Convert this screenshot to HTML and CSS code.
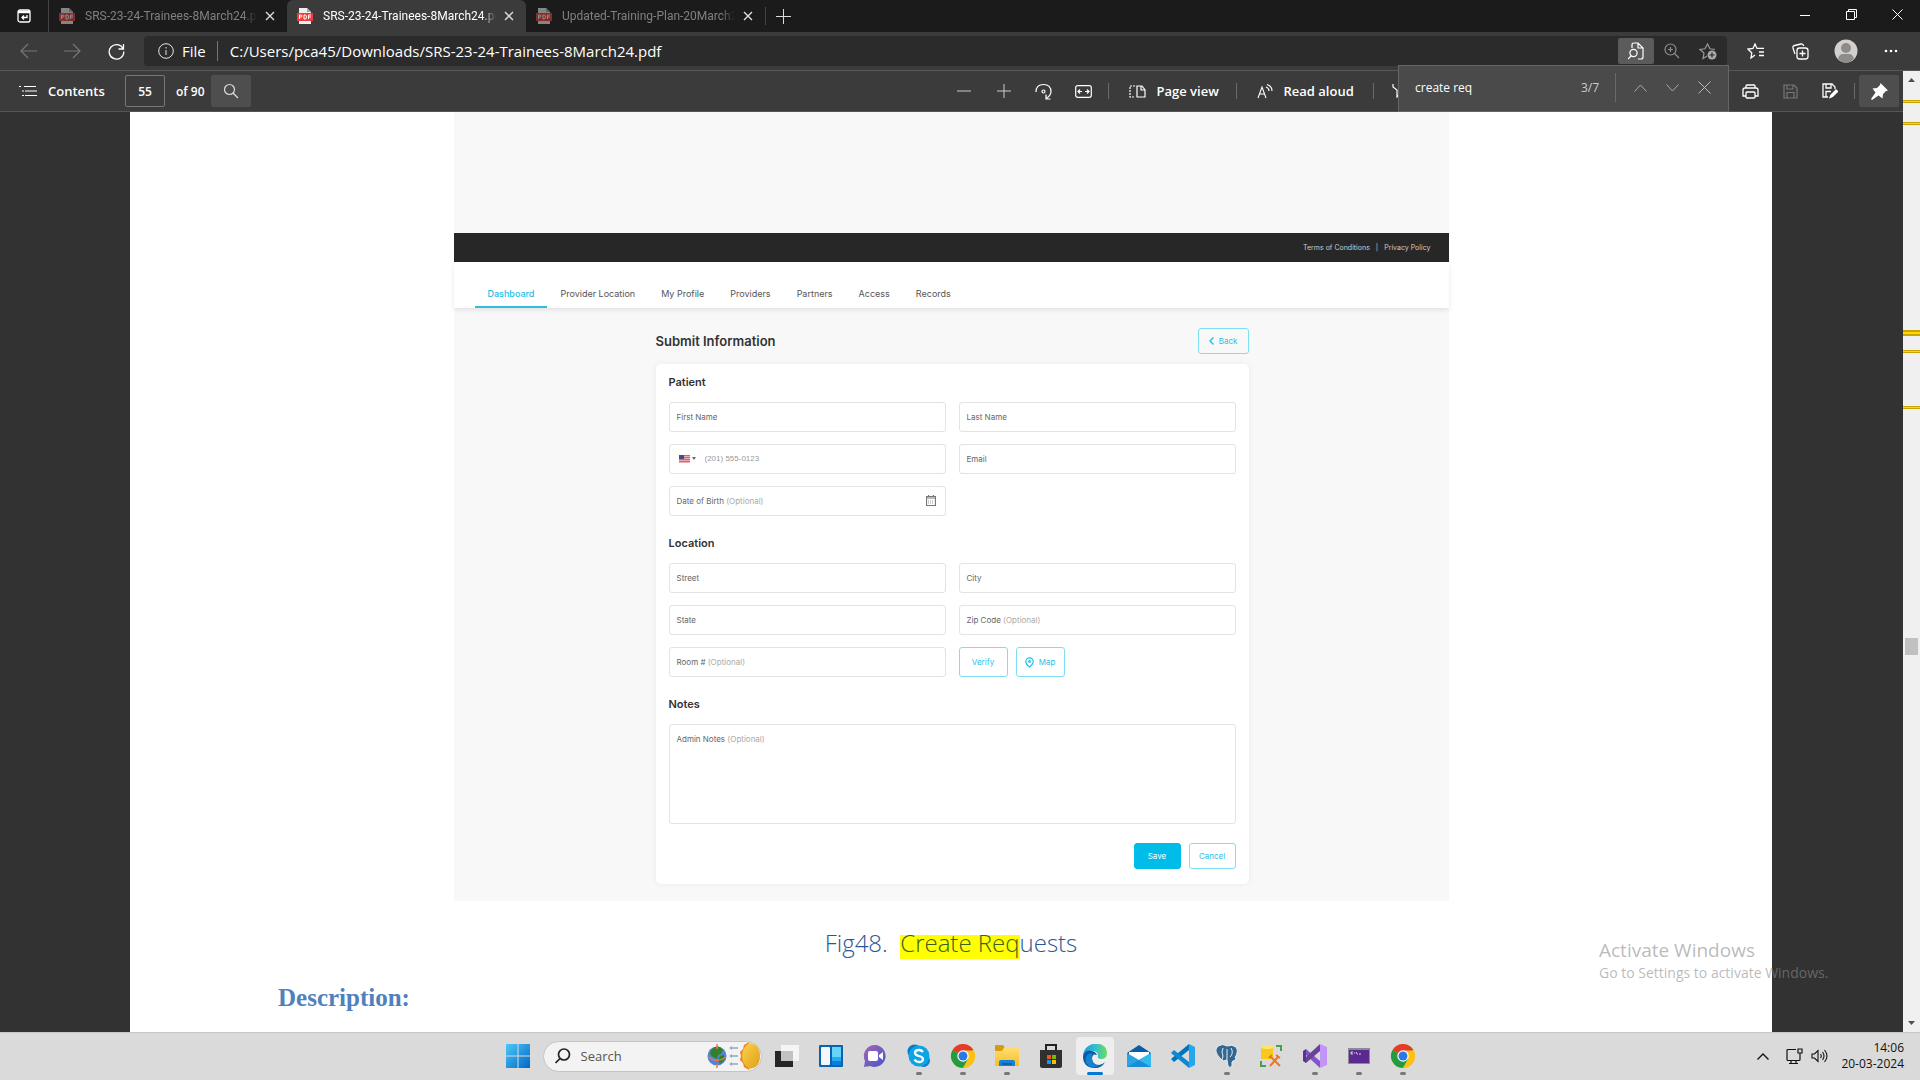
FILE: index.html
```html
<!DOCTYPE html>
<html lang="en">
<head>
<meta charset="utf-8">
<title>SRS-23-24-Trainees-8March24.pdf</title>
<link rel="stylesheet" href="styles.css">
</head>
<body>
<svg class="defs" aria-hidden="true">
  <defs>
    <linearGradient id="g-win" x1="0" y1="0" x2="1" y2="1"><stop offset="0" stop-color="#4cc8f8"/><stop offset="1" stop-color="#0067c4"/></linearGradient>
    <linearGradient id="g-chat" x1="0" y1="0" x2="1" y2="1"><stop offset="0" stop-color="#a566b4"/><stop offset="1" stop-color="#4655c8"/></linearGradient>
    <linearGradient id="g-folder" x1="0" y1="0" x2="0" y2="1"><stop offset="0" stop-color="#ffdf70"/><stop offset="1" stop-color="#f6bd27"/></linearGradient>
    <linearGradient id="g-edge" x1="0" y1="0" x2="1" y2="0"><stop offset="0" stop-color="#2394dc"/><stop offset=".5" stop-color="#32bfd0"/><stop offset="1" stop-color="#6ade5a"/></linearGradient>
    <linearGradient id="g-sun" x1="0" y1="0" x2="1" y2="1"><stop offset="0" stop-color="#ffd24d"/><stop offset="1" stop-color="#dc9f16"/></linearGradient>
    <symbol id="pdf" viewBox="0 0 16 16"><path d="M2 0h8l4 4v12H2z" fill="#eee"/><path d="M10 0v4h4" fill="#aaa"/><path d="M0 5h16v8H0z" fill="#f23b3b"/><path d="M2.500 11V7h1.500q1 0 1 1t-1 1H2.500M7 7v4h1q1.500 0 1.500-2T8 7zM11.500 11V7h2.500M11.500 9H14" fill="none" stroke="#fff"/></symbol>
    <symbol id="close" viewBox="0 0 10 10"><path d="M1 1l8 8M9 1L1 9" fill="none" stroke="currentColor" stroke-width="1.400"/></symbol>
    <symbol id="chrome" viewBox="0 0 24 24"><circle cx="12" cy="12" r="12" fill="#fbc116"/><path d="M1.600 6A12 12 0 0 1 22.400 6L12 12z" fill="#e33b2e"/><path d="M12 12L1.600 6a12 12 0 0 0 10.400 18l5.200-9z" fill="#249a41"/><path d="M12 6.500h10.700A12 12 0 0 1 12 24l5-9z" fill="#fbc116"/><circle cx="12" cy="12" r="5.700" fill="#fff"/><circle cx="12" cy="12" r="4.500" fill="#2a78e8"/></symbol>
  </defs>
</svg>
<div class="screen">
  <header class="tabs">
    <button class="tab-menu" aria-label="Tab actions"><svg width="14" height="14" viewBox="0 0 14 14" fill="none" stroke="#fff" stroke-width="1.300"><rect x="1" y="1" width="12" height="12" rx="2"/><path d="M1 3h12" stroke-width="2.500"/><path d="M10 6v2.500H5M7 6.500l-2 2 2 2"/></svg></button>
    <div class="tab first"><svg class="fav" width="16" height="16"><use href="#pdf"/></svg><span class="tab-title">SRS-23-24-Trainees-8March24.pdf</span><button class="tab-close" aria-label="Close tab"><svg width="10" height="10"><use href="#close"/></svg></button></div>
    <div class="tab active"><svg class="fav" width="16" height="16"><use href="#pdf"/></svg><span class="tab-title">SRS-23-24-Trainees-8March24.pdf</span><button class="tab-close" aria-label="Close tab"><svg width="10" height="10"><use href="#close"/></svg></button></div>
    <div class="tab"><svg class="fav" width="16" height="16"><use href="#pdf"/></svg><span class="tab-title">Updated-Training-Plan-20March24.pdf</span><button class="tab-close" aria-label="Close tab"><svg width="10" height="10"><use href="#close"/></svg></button></div>
    <button class="new-tab" aria-label="New tab"><svg width="15" height="15" viewBox="0 0 15 15" stroke="#ddd"><path d="M7.500 0v15M0 7.500h15"/></svg></button>
    <div class="win">
      <button aria-label="Minimise"><svg width="10" height="10" stroke="#fff"><path d="M0 5.500h10"/></svg></button>
      <button aria-label="Restore"><svg width="11" height="11" viewBox="0 0 11 11" fill="none" stroke="#fff"><path d="M.5 2.500h8v8h-8zM2.500 2.500v-2h8v8h-2"/></svg></button>
      <button aria-label="Close"><svg width="11" height="11" viewBox="0 0 11 11" stroke="#fff"><path d="M.5.5l10 10M10.500.5l-10 10"/></svg></button>
    </div>
  </header>

  <div class="address-row">
    <button class="nav-btn" aria-label="Back"><svg width="17" height="16" viewBox="0 0 17 16" fill="none" stroke="#777" stroke-width="1.200"><path d="M17 8H1M8 1L1 8l7 7"/></svg></button>
    <button class="nav-btn" aria-label="Forward"><svg width="17" height="16" viewBox="0 0 17 16" fill="none" stroke="#777" stroke-width="1.200"><path d="M0 8h16M9 1l7 7-7 7"/></svg></button>
    <button class="nav-btn" aria-label="Reload"><svg width="17" height="17" viewBox="0 0 17 17" fill="none" stroke="#fff" stroke-width="1.300"><path d="M15 5.500A7.300 7.300 0 1 0 15.800 8.500M15.500 1v5h-5"/></svg></button>
    <div class="address">
      <svg width="16" height="16" viewBox="0 0 16 16" fill="none" stroke="#e5e5e5"><circle cx="8" cy="8" r="7.300"/><path d="M8 7v5M8 4v1.500"/></svg>
      <span class="scheme">File</span>
      <input class="url" aria-label="Address" value="C:/Users/pca45/Downloads/SRS-23-24-Trainees-8March24.pdf">
      <button class="addr-btn on" aria-label="Find on page"><svg width="16" height="18" viewBox="0 0 16 18" fill="none" stroke="#fff" stroke-width="1.200"><path d="M4 6V3q0-2 2-2h4l5 5v9q0 2-2 2h-3M10 1v5h5"/><circle cx="5.500" cy="11" r="3.600"/><path d="M3 14l-3 3"/></svg></button>
      <button class="addr-btn" aria-label="Zoom"><svg width="16" height="16" viewBox="0 0 16 16" fill="none" stroke="#8d8d8d" stroke-width="1.200"><circle cx="6.500" cy="6.500" r="5.500"/><path d="M10.500 10.500L15 15M6.500 4v5M4 6.500h5"/></svg></button>
      <button class="addr-btn" aria-label="Add to favourites"><svg width="18" height="18" viewBox="0 0 18 18" fill="none" stroke="#999" stroke-width="1.200"><path d="M8 14l-4 2.500 1-5.500-4-3.500 5-.7L8.500 2 11 6.800l5 .7"/><circle cx="13" cy="13" r="4.500" fill="#aaa" stroke="none"/><path d="M13 10.500v5M10.500 13h5" stroke="#2b2b2b"/></svg></button>
    </div>
    <div class="browser-actions">
      <button aria-label="Favourites"><svg width="18" height="16" viewBox="0 0 18 16" fill="none" stroke="#fff" stroke-width="1.300"><path d="M8 12l-4 3 .8-5L1 6l5-.6L8 1l2 4.400h7M12 9h5M12 12.500h5"/></svg></button>
      <button aria-label="Collections"><svg width="17" height="17" viewBox="0 0 17 17" fill="none" stroke="#fff" stroke-width="1.300"><rect x="5" y="5" width="11" height="11" rx="2.500"/><path d="M10.500 7.500v6M7.500 10.500h6M3 11L1 5q-.5-2 1.500-2.500L9 1q2-.4 2.800 2"/></svg></button>
      <button aria-label="Profile"><svg width="24" height="24" viewBox="0 0 24 24"><circle cx="12" cy="12" r="11.500" fill="#d2d0ce"/><circle cx="12" cy="9" r="5" fill="#8f8b88"/><path d="M4 20q1-5 5-5h6q4 0 5 5-8 7-16 0" fill="#8f8b88"/></svg></button>
      <button aria-label="Settings and more"><svg width="14" height="4" fill="#fff"><circle cx="2" cy="2" r="1.300"/><circle cx="7" cy="2" r="1.300"/><circle cx="12" cy="2" r="1.300"/></svg></button>
    </div>
  </div>

  <main class="viewer">
    <div class="doc">
      <div class="pdf-bar">
        <div class="pdf-left">
          <button class="contents"><svg width="18" height="12" viewBox="0 0 18 12" stroke="#fff" stroke-width="1.200"><path d="M5 1.500h12M6 6h12M6 10.500h12M0 1.500h2M3 6h2M3 10.500h2"/></svg>Contents</button>
          <input class="page-no" aria-label="Page number" value="55"><span class="page-total">of 90</span>
          <button class="search-btn" aria-label="Search"><svg width="16" height="16" viewBox="0 0 16 16" fill="none" stroke="#ddd" stroke-width="1.200"><circle cx="6.500" cy="6.500" r="5"/><path d="M10 10l5 5"/></svg></button>
        </div>
        <div class="pdf-right">
          <div class="pdf-tools">
            <button class="tool" aria-label="Zoom out"><svg width="14" height="14" stroke="#ccc"><path d="M0 7h14"/></svg></button>
            <button class="tool" aria-label="Zoom in"><svg width="14" height="14" stroke="#ccc"><path d="M0 7h14M7 0v14"/></svg></button>
            <button class="tool" aria-label="Rotate"><svg width="17" height="17" viewBox="0 0 17 17" fill="none" stroke="#fff" stroke-width="1.200"><path d="M1 9q0-7.500 7.500-7.500T16 9q-.5 4-5 6.500M11 11.500V16h4.500"/><circle cx="8.500" cy="8.500" r="1.500"/></svg></button>
            <button class="tool" aria-label="Fit to width"><svg width="17" height="13" viewBox="0 0 17 13" fill="none" stroke="#fff" stroke-width="1.200"><rect x=".7" y=".7" width="15.600" height="11.600" rx="2"/><path d="M3 6.500h4M10 6.500h4M5 4.500l-2 2 2 2M12 4.500l2 2-2 2"/></svg></button>
            <span class="sep"></span>
            <button class="text-tool view"><svg width="17" height="13" viewBox="0 0 17 13" fill="none" stroke="#fff" stroke-width="1.200"><path d="M8 1h5l3 4v7H8zM12 1v4h4"/><path d="M6 1H1v11h5" stroke-dasharray="2 1"/></svg>Page view</button>
            <span class="sep"></span>
            <button class="text-tool read"><svg width="16" height="15" viewBox="0 0 16 15" fill="none" stroke="#fff" stroke-width="1.100"><path d="M1 14L5 3l4 11M2.500 10h5M9 3q3 1 3 4M10 .5q5 1.500 5 6.500"/></svg>Read aloud</button>
            <span class="sep"></span>
            <button class="tool draw" aria-label="Draw"><svg width="16" height="14" viewBox="0 0 16 14" fill="none" stroke="#fff" stroke-width="1.200"><path d="M1 0v3l4 3v7l5-7 4-3V0"/></svg></button>
          </div>
          <div class="pdf-actions">
            <button class="act" aria-label="Print"><svg width="17" height="15" viewBox="0 0 17 15" fill="none" stroke="#fff" stroke-width="1.300"><path d="M4 4V2q0-1 1-1h7q1 0 1 1v2M4 12H1V6q0-2 2-2h11q2 0 2 2v6h-3"/><rect x="4" y="8" width="9" height="6" rx="1"/></svg></button>
            <button class="act" aria-label="Save"><svg width="15" height="15" viewBox="0 0 15 15" fill="none" stroke="#777" stroke-width="1.200"><path d="M1 1h10l3 3v10H1zM4 1v4h6V1M4 14V8.500h7V14"/></svg></button>
            <button class="act" aria-label="Save as"><svg width="16" height="16" viewBox="0 0 16 16" fill="none" stroke="#fff" stroke-width="1.300"><path d="M6 14H1V1h9l3 3v2M4 1v4h5V1M4 14V8.500h5"/><path d="M8 14.500l1-2.500 5-5 1.500 1.500-5 5z" fill="#fff"/></svg></button>
            <span class="sep"></span>
            <button class="pin" aria-label="Pin toolbar"><svg width="17" height="17" viewBox="0 0 17 17" fill="#fff"><path d="M9.500 0L17 7.500l-2 .5-3 3-.5 4.500-4-3L1 17l-1-1 4.500-6.500-3-4L6 5l3-3z"/></svg></button>
          </div>
        </div>
      </div>

      <div class="canvas">
        <article class="page">
          <figure class="figure">
            <div class="shot">
              <div class="prev"></div>
              <div class="topbar"><a href="#">Terms of Conditions</a><span>|</span><a href="#">Privacy Policy</a></div>
              <nav class="site-nav"><a class="current" href="#">Dashboard</a><a href="#">Provider Location</a><a href="#">My Profile</a><a href="#">Providers</a><a href="#">Partners</a><a href="#">Access</a><a href="#">Records</a></nav>
              <form class="form">
                <div class="form-head"><h1>Submit Information</h1><button type="button" class="btn"><svg width="5" height="8" viewBox="0 0 5 8" fill="none" stroke="#1cc2ea" stroke-width="1.400"><path d="M4.500.5L1 4l3.500 3.500"/></svg>Back</button></div>
                <div class="card">
                  <section>
                    <h2>Patient</h2>
                    <div class="grid">
                      <label class="field"><span>First Name</span><input></label>
                      <label class="field"><span>Last Name</span><input></label>
                      <div class="field phone"><svg width="11" height="8" viewBox="0 0 11 8"><path d="M0 0h11v8H0z" fill="#eeb0b6"/><path d="M0 .5h11M0 2.500h11M0 4.500h11M0 6.500h11" stroke="#cf6672"/><path d="M0 0h5v4H0z" fill="#474c83"/></svg><svg width="4" height="3"><path d="M0 0h4L2 3z" fill="#666"/></svg><input type="tel" aria-label="Phone" placeholder="(201) 555-0123"></div>
                      <label class="field"><span>Email</span><input></label>
                      <label class="field"><span>Date of Birth <i>(Optional)</i></span><input><svg width="10" height="11" viewBox="0 0 10 11" fill="none" stroke="#777"><path d="M.5 1.500h9v9h-9zM0 3h10M2.500 0v2M7.500 0v2" stroke-width="1.200"/><path d="M2 6h6M2 8h6" stroke="#999" stroke-dasharray="1 1"/></svg></label>
                    </div>
                  </section>
                  <section>
                    <h2>Location</h2>
                    <div class="grid">
                      <label class="field"><span>Street</span><input></label>
                      <label class="field"><span>City</span><input></label>
                      <label class="field"><span>State</span><input></label>
                      <label class="field"><span>Zip Code <i>(Optional)</i></span><input></label>
                      <label class="field"><span>Room # <i>(Optional)</i></span><input></label>
                      <div class="pair"><button type="button" class="btn">Verify</button><button type="button" class="btn"><svg width="9" height="11" viewBox="0 0 9 11" fill="none" stroke="#1cc2ea" stroke-width="1.200"><path d="M4.500 10Q.8 7 .8 4.500a3.700 3.700 0 0 1 7.400 0Q8.200 7 4.500 10z"/><circle cx="4.500" cy="4.500" r=".8"/></svg>Map</button></div>
                    </div>
                  </section>
                  <section>
                    <h2>Notes</h2>
                    <label class="field notes"><span>Admin Notes <i>(Optional)</i></span><textarea></textarea></label>
                  </section>
                  <div class="actions"><button type="button" class="btn solid">Save</button><button type="button" class="btn">Cancel</button></div>
                </div>
              </form>
            </div>
            <figcaption>Fig48.&nbsp; <mark>Create Req</mark>uests</figcaption>
          </figure>
          <h2 class="desc">Description:</h2>
        </article>
      </div>
    </div>

    <div class="scrollbar">
      <svg class="arrow" width="7" height="4"><path d="M0 4L3.500 0 7 4z" fill="#505050"/></svg>
      <i class="hit hit-1"></i><i class="hit hit-2"></i><i class="hit hit-3 tall"></i><i class="hit hit-4"></i><i class="hit hit-5"></i><i class="thumb"></i>
      <svg class="arrow" width="7" height="4"><path d="M0 0h7L3.500 4z" fill="#505050"/></svg>
    </div>

    <div class="find">
      <input aria-label="Find on page" value="create req"><span class="count">3/7</span><span class="find-sep"></span>
      <button aria-label="Previous"><svg width="13" height="8" viewBox="0 0 13 8" fill="none" stroke="#aaa"><path d="M.5 7.500l6-6.500 6 6.500"/></svg></button>
      <button aria-label="Next"><svg width="13" height="8" viewBox="0 0 13 8" fill="none" stroke="#aaa"><path d="M.5.5l6 6.500 6-6.500"/></svg></button>
      <button aria-label="Close find bar"><svg width="13" height="13" viewBox="0 0 13 13" stroke="#bbb"><path d="M.5.5l12 12M12.500.5l-12 12"/></svg></button>
    </div>
    <div class="watermark"><p class="big">Activate Windows</p><p>Go to Settings to activate Windows.</p></div>
  </main>

  <footer class="taskbar">
    <div class="apps">
      <button class="app start" aria-label="Start"><svg width="24" height="24" viewBox="0 0 24 24" fill="url(#g-win)"><path d="M0 0h11.500v11.500H0zM12.500 0H24v11.500H12.500zM0 12.500h11.500V24H0zM12.500 12.500H24V24H12.500z"/></svg></button>
      <div class="search"><svg width="16" height="16" viewBox="0 0 16 16" fill="none" stroke="#222" stroke-width="1.700"><circle cx="9" cy="6.500" r="5.500"/><path d="M5 10.500l-4.500 4.500"/></svg><input aria-label="Search" placeholder="Search">
        <svg width="54" height="28" viewBox="0 0 54 28"><circle cx="10" cy="14" r="9.500" fill="#4f86cf"/><path d="M4 8q5-5 9-3l3 3-2 4-3 1-1 4-4-2-3-3zM13 14l4-1 1 4-5 5-2-4z" fill="#357f24"/><path d="M10 2v5M10 22v4M1 15q9 7 18 0" fill="none" stroke="#ee765d" stroke-width="1.500"/><g fill="#94a9c4"><path d="M22 6l3-2v1.300h6v1.500h-6V8zM22 14l3-2v1.300h6v1.500h-6V16zM22 22l3-2v1.300h6v1.500h-6V24z"/></g><path d="M42 0l-5 3-1 4-3 3 1 4-1 4 3 3 1 4 5 3z" fill="#ed7f22"/><path d="M42 1q11 1 11 13T42 27q-7-5-7-13T42 1" fill="url(#g-sun)"/></svg></div>
      <button class="app" aria-label="Task view"><svg width="24" height="22"><path d="M0 6h18v16H0z" fill="#262626"/><path d="M6 0h18v16H6z" fill="#fff" opacity=".72"/></svg></button>
      <button class="app" aria-label="Widgets"><svg width="24" height="22"><rect width="24" height="22" rx="1" fill="#0a63ae"/><rect x="2" y="2" width="9" height="18" rx="1" fill="#f3f6fb"/><path d="M13 2h9v10h-9z" fill="#65d5fb"/><path d="M13 12h9v4h-9z" fill="#27a8f0"/><path d="M13 16h9v4h-9z" fill="#087fe0"/></svg></button>
      <button class="app" aria-label="Chat"><svg width="24" height="24"><path d="M12 1a11 11 0 1 1-5 21l-6 1 1-6A11 11 0 0 1 12 1" fill="url(#g-chat)"/><rect x="5" y="7" width="10" height="10" rx="2" fill="#fff"/><path d="M16 11l4-3v8l-4-3z" fill="#fff"/></svg></button>
      <button class="app running" aria-label="Skype"><svg width="24" height="24" viewBox="0 0 24 24"><circle cx="7.500" cy="7.500" r="7" fill="#0b78c9"/><circle cx="16.500" cy="16.500" r="6.500" fill="#067fcd"/><circle cx="12" cy="12" r="10.500" fill="#0ca4e4"/><path d="M16 8q-1.500-2-4-2-4 0-4 3c0 4 8 2 8 6q0 3-4 3-3 0-4.500-2.500" fill="none" stroke="#fff" stroke-width="2.300"/></svg></button>
      <button class="app running" aria-label="Chrome"><svg width="24" height="24"><use href="#chrome"/></svg></button>
      <button class="app running" aria-label="File Explorer"><svg width="24" height="24"><path d="M0 2q0-1 1-1h7l2 3h-1l-2 3H0z" fill="#d89b0b"/><path d="M0 7h7l3-4h13q1 0 1 1v18H1q-1 0-1-1z" fill="url(#g-folder)"/><path d="M4 22v-4q0-2 2-2h12q2 0 2 2v4z" fill="#1482d8"/><path d="M7 20h10" stroke="#0b62a8" stroke-width="2"/></svg></button>
      <button class="app" aria-label="Store"><svg width="24" height="24"><path d="M7 6V1h10v5" fill="none" stroke="#222" stroke-width="2"/><path d="M1 6h22v16q0 2-2 2H3q-2 0-2-2z" fill="#303030"/><path d="M8 11h4v4H8z" fill="#f15022"/><path d="M13 11h4v4h-4z" fill="#7db900"/><path d="M8 16h4v4H8z" fill="#00a2ed"/><path d="M13 16h4v4h-4z" fill="#ffb900"/></svg></button>
      <button class="app current" aria-label="Edge"><svg width="24" height="24" viewBox="0 0 24 24"><path d="M0 12C1-4 24-4 24 9q0 6-6 6-4 0-3-3 0-5-6-5-6 0-9 5" fill="url(#g-edge)"/><path d="M0 12q2-6 8-5 4 0 6 4-5-2-5 4 1 6 7 6 3 0 6-3-3 6-10 6Q0 24 0 12" fill="#0c59a4"/><path d="M3 19q-2-10 7-10-2 2-1 6 1 6 7 6-3 3-7 2-4-1-6-4" fill="#1583d2"/></svg></button>
      <button class="app" aria-label="Mail"><svg width="24" height="22"><path d="M0 8l12-8 12 8v4H0z" fill="#0b5ca8"/><path d="M2 7h20v9H2z" fill="#fff"/><path d="M0 8l12 7 12-7v14H0z" fill="#2aa3e6"/><path d="M0 22l24-14v14z" fill="#32b9ed"/><path d="M0 22l12-7 12 7z" fill="#178ed6"/></svg></button>
      <button class="app" aria-label="Visual Studio Code"><svg width="24" height="24"><path d="M18 0l6 3v18l-6 3z" fill="#29a5ed"/><path d="M18 0v6L3 18l-3-3z" fill="#0074bd"/><path d="M18 24v-6L3 6 0 9z" fill="#0b8ad1"/></svg></button>
      <button class="app running" aria-label="PostgreSQL"><svg width="24" height="24"><path d="M3 2q5-3 9 0 5-2 9 1 3 4-1 11l2 1-4 2-1 1v4q-2 3-4 0l-1-6-4 1Q0 10 1 5z" fill="#336791" stroke="#e8edf2"/><path d="M8 4q-2 4 0 8l-1 4M16 4q3 5-1 9M12 5v11" fill="none" stroke="#e8edf2"/></svg></button>
      <button class="app" aria-label="Database tools"><svg width="24" height="24"><path d="M2 3h12v12H2z" fill="#f8c91c"/><ellipse cx="8" cy="3" rx="6" ry="2" fill="#ffe36a"/><path d="M17 2h5v5M2 17v5h5" fill="none" stroke="#48a04d" stroke-width="2"/><path d="M12 13l9 9M19 13l-8 9M10 14l3-3M17 11l4 3" stroke="#ee7522" stroke-width="2"/></svg></button>
      <button class="app running" aria-label="Visual Studio"><svg width="24" height="24"><path d="M17 0l7 3v18l-7 3z" fill="#c293f8"/><path d="M3 5l14 12v7L3 11z" fill="#8555c8"/><path d="M0 7l3-2v14l-3-2z" fill="#593298"/><path d="M3 19L17 7V0L3 13z" fill="#694299"/></svg></button>
      <button class="app running" aria-label="Command prompt"><svg width="22" height="16"><path d="M0 0h22v16H0z" fill="#8b8b94"/><path d="M1 2h20v13H1z" fill="#5c2991"/><path d="M5 4H3v2h2M6.500 4v.5M6.500 5.500V6M8 4l1.500 2.500M11 6h2" fill="none" stroke="#fff" stroke-width=".8"/></svg></button>
      <button class="app running" aria-label="Chrome"><svg width="24" height="24"><use href="#chrome"/></svg></button>
    </div>
    <div class="tray">
      <button aria-label="Hidden icons"><svg width="12" height="7" fill="none" stroke="#111" stroke-width="1.400"><path d="M.5 6.500L6 1l5.500 5.500"/></svg></button>
      <svg width="17" height="16" viewBox="0 0 17 16" fill="none" stroke="#111" stroke-width="1.200"><path d="M10 1.500H2q-1 0-1 1v9q0 1 1 1h11q1 0 1-1V6M5 12.500v3M10 12.500v3M3 15.500h9M12 1h4v4h-4zM14 5v4"/></svg>
      <svg width="17" height="14" viewBox="0 0 17 14" fill="none" stroke="#111" stroke-width="1.100"><path d="M1 5h2.500L7 1.500v11L3.500 9H1zM9.500 5q1.500 2 0 4M11.500 3q3 4 0 8M13.500 1q5 6 0 12"/></svg>
      <div class="clock"><time>14:06</time><time>20-03-2024</time></div>
    </div>
  </footer>
</div>
</body>
</html>
```
FILE: styles.css
```css
* { box-sizing: border-box; }
body { margin: 0; font-family: "Open Sans", "Noto Sans", sans-serif; font-size: 12px; }
button, input, textarea { font: inherit; color: inherit; background: none; border: 0; padding: 0; margin: 0; outline: 0; min-width: 0; }
button { display: flex; align-items: center; justify-content: center; flex: none; }
svg { flex: none; display: block; }
a { color: inherit; text-decoration: none; }
h1, h2, p, figure { margin: 0; }
.defs { position: absolute; width: 0; height: 0; }
.screen { display: flex; flex-direction: column; height: 100vh; overflow: hidden; color: #fff; }

/* tab strip */
.tabs { display: flex; height: 32px; background: #1b1b1b; flex: none; }
.tab-menu { width: 48px; }
.tab { display: flex; align-items: center; width: 239px; padding: 0 12px 0 10px; color: #808080; }
.tab.first { border-left: 1px solid #444; }
.tab.active { background: #3b3b3b; color: #fff; border-radius: 6px 6px 0 0; }
.fav { opacity: .5; margin-right: 10px; }
.active .fav { opacity: 1; }
.tab-title { flex: 1; overflow: hidden; white-space: nowrap; font-family: Roboto, "Open Sans", sans-serif; mask-image: linear-gradient(to right, #000 92%, transparent); }
.tab-close { width: 10px; margin-left: 8px; color: #ddd; }
.new-tab { width: 35px; border-left: 1px solid #444; margin: 7px 0; }
.win { display: flex; margin-left: auto; height: 29px; }
.win button { width: 46px; }

/* address row */
.address-row { display: flex; align-items: center; height: 39px; padding: 0 7px 0 6px; background: #3b3b3b; border-bottom: 1px solid #585858; flex: none; }
.nav-btn { width: 44px; height: 30px; }
.address { display: flex; align-items: center; flex: 1; height: 30px; margin-left: 6px; padding: 0 1px 0 14px; background: #2b2b2b; border-radius: 4px; font-size: 15px; }
.scheme { margin: 0 11px 0 8px; }
.url { flex: 1; border-left: 1px solid #777; padding-left: 12px; line-height: 20px; }
.addr-btn { width: 36px; height: 26px; border-radius: 2px; }
.addr-btn.on { background: #5b5b5b; }
.browser-actions { display: flex; margin-left: 6px; }
.browser-actions button { width: 45px; }

/* viewer */
.viewer { position: relative; display: flex; flex: 1; min-height: 0; }
.doc { display: flex; flex-direction: column; flex: 1; min-width: 0; }
.pdf-bar { display: grid; grid-template-columns: 1fr 1fr; height: 41px; background: #3b3b3b; border-bottom: 1px solid #555; flex: none; font-size: 13px; font-weight: 600; }
.pdf-left, .pdf-right, .pdf-tools, .pdf-actions { display: flex; align-items: center; }
.pdf-left { padding-left: 19px; }
.pdf-right { justify-content: space-between; }
.contents { gap: 11px; width: 86px; justify-content: flex-start; }
.page-no { width: 40px; height: 32px; margin: 0 11px 0 20px; border: 1px solid #777; border-radius: 2px; text-align: center; font-size: 12px; }
.page-total { width: 35px; font-size: 12px; }
.search-btn, .pin { width: 40px; height: 32px; background: #4e4e4e; border-radius: 2px; }
.tool { width: 24px; margin-right: 16px; }
.sep { width: 1px; height: 16px; background: #6a6a6a; }
.tool + .sep { margin-left: -4px; }
.text-tool { justify-content: flex-start; gap: 11px; padding-left: 20px; }
.view { width: 127px; }
.read { width: 136px; }
.draw { margin: 0 0 0 14px; }
.act { width: 40px; }
.pdf-actions .sep { margin: 0 4px; }
.pdf-actions { padding-right: 4px; }

.canvas { flex: 1; min-height: 0; overflow: hidden; background: #323232; padding: 0 131px 0 130px; }
.page { background: #fff; min-height: 100%; }
.figure { display: flex; flex-direction: column; align-items: center; }
.shot { width: 100%; max-width: 995px; background: #f8f8f8; color: #666; font-family: Inter, "Open Sans", sans-serif; font-size: 8px; }
.prev { height: 121px; }
.topbar { display: flex; justify-content: flex-end; align-items: center; gap: 6px; height: 29px; padding-right: 18px; background: #272727; color: #ccc; font-size: 7px; }
.site-nav { display: flex; height: 46px; padding: 0 21px; background: #fff; color: #555; font-size: 9px; box-shadow: 0 2px 5px #00000018; }
.site-nav a { padding: 26px 13px 0; line-height: 12px; }
.site-nav .current { color: #1cbde3; border-bottom: 2px solid #2dbfe0; font-weight: 500; }
.form { width: 100%; max-width: 595px; margin: 0 auto; padding: 20px 0 17px 2px; }
.form-head { display: flex; justify-content: space-between; align-items: center; margin-bottom: 10px; }
.form h1 { font-size: 13px; font-weight: 600; color: #333; }
.btn { gap: 5px; height: 26px; min-width: 47px; padding: 0 7px; border: 1px solid #7edff4; border-radius: 3px; color: #2bc0e6; }
.form-head .btn { min-width: 51px; }
.btn.solid { background: #00bce9; color: #fff; border-color: #00bce9; }
.card { display: flex; flex-direction: column; gap: 19px; padding: 10px 13px 15px; background: #fff; border-radius: 5px; box-shadow: 0 0 6px #0000000f; }
.card h2 { font-size: 11px; line-height: 16px; font-weight: 600; color: #333; margin-bottom: 12px; }
.grid { display: grid; grid-template-columns: 1fr 1fr; gap: 12px 13px; }
.field { display: flex; align-items: center; height: 30px; padding: 0 9px 1px 7px; border: 1px solid #e3e3e3; border-radius: 3px; }
.field i { font-style: normal; color: #aaa; }
.field input { flex: 1; }
.phone input { font-family: "Liberation Sans", sans-serif; padding-left: 7px; }
.phone { gap: 2px; padding-left: 9px; }
.phone input::placeholder { color: #999; }
.pair { display: flex; gap: 8px; }
.pair .btn { height: 30px; width: 49px; }
.notes { flex-direction: column; align-items: stretch; height: 100px; padding-top: 9px; }
.notes textarea { flex: 1; resize: none; }
.actions { display: flex; justify-content: flex-end; gap: 8px; }
figcaption { margin-top: 26px; font-size: 24px; line-height: 32px; font-weight: 300; color: #2f5597; }
mark { background: linear-gradient(#ff0, #ff0) 0 100% / 100% 24px no-repeat; color: #3d5f1c; }
.desc { margin: 23px 0 0 148px; font-family: "Liberation Serif", serif; font-size: 25px; line-height: 32px; color: #4f81bd; }

/* result marks sit over the scroll track at their match positions */
.scrollbar { position: relative; display: flex; flex-direction: column; align-items: center; justify-content: space-between; width: 17px; padding: 7px 0; background: #f0f0f0; }
.hit { position: absolute; left: 0; right: 0; height: 3px; background: #ffd800; border: solid #c9a400; border-width: 1px 0; }
.hit.tall { height: 6px; border-width: 2px 0; }
.hit-1 { top: 3%; }
.hit-2 { top: 5.300%; }
.hit-3 { top: 27%; }
.hit-4 { top: 29%; }
.hit-5 { top: 34.900%; }
.thumb { position: absolute; left: 2px; right: 2px; top: 59%; height: 17px; background: #c1c1c1; }

.find { position: absolute; right: 191px; top: -6px; display: flex; align-items: center; width: 331px; height: 47px; padding: 0 8px 2px 16px; background: #4a4a4a; border: 1px solid #666; }
.find input { flex: 1; }
.count { color: #ccc; margin-right: 16px; }
.find-sep { width: 1px; height: 29px; background: #6a6a6a; margin-right: 8px; }
.find button { width: 32px; }
.watermark { position: absolute; right: 85px; bottom: 48px; width: 236px; color: #8c8c8c99; font-size: 14px; line-height: 22px; white-space: nowrap; }
.watermark .big { font-size: 19px; line-height: 24px; }

/* taskbar */
.taskbar { position: relative; display: flex; justify-content: center; align-items: center; height: 48px; padding-bottom: 1px; background: #dadada; border-top: 1px solid #c6c6c6; color: #111; flex: none; }
.apps { display: flex; align-items: center; gap: 6px; }
.app { position: relative; width: 38px; height: 38px; border-radius: 4px; }
.app.current { background: #eee; }
.app.running::after, .app.current::after { content: ""; position: absolute; bottom: 0; width: 6px; height: 3px; border-radius: 2px; background: #777; }
.app.current::after { width: 16px; background: #0078d4; }
.search { display: flex; align-items: center; gap: 10px; width: 219px; height: 31px; padding: 0 0 0 11px; background: #f3f3f3; border: 1px solid #c4c4c4; border-radius: 16px; font-size: 13px; }
.search input { flex: 1; }
.search input::placeholder { color: #555; }
.tray { position: absolute; right: 16px; top: 0; height: 46px; display: flex; align-items: center; gap: 8px; }
.tray button { width: 30px; }
.clock { display: flex; flex-direction: column; align-items: flex-end; font-size: 12px; line-height: 16px; min-width: 68px; }
```
